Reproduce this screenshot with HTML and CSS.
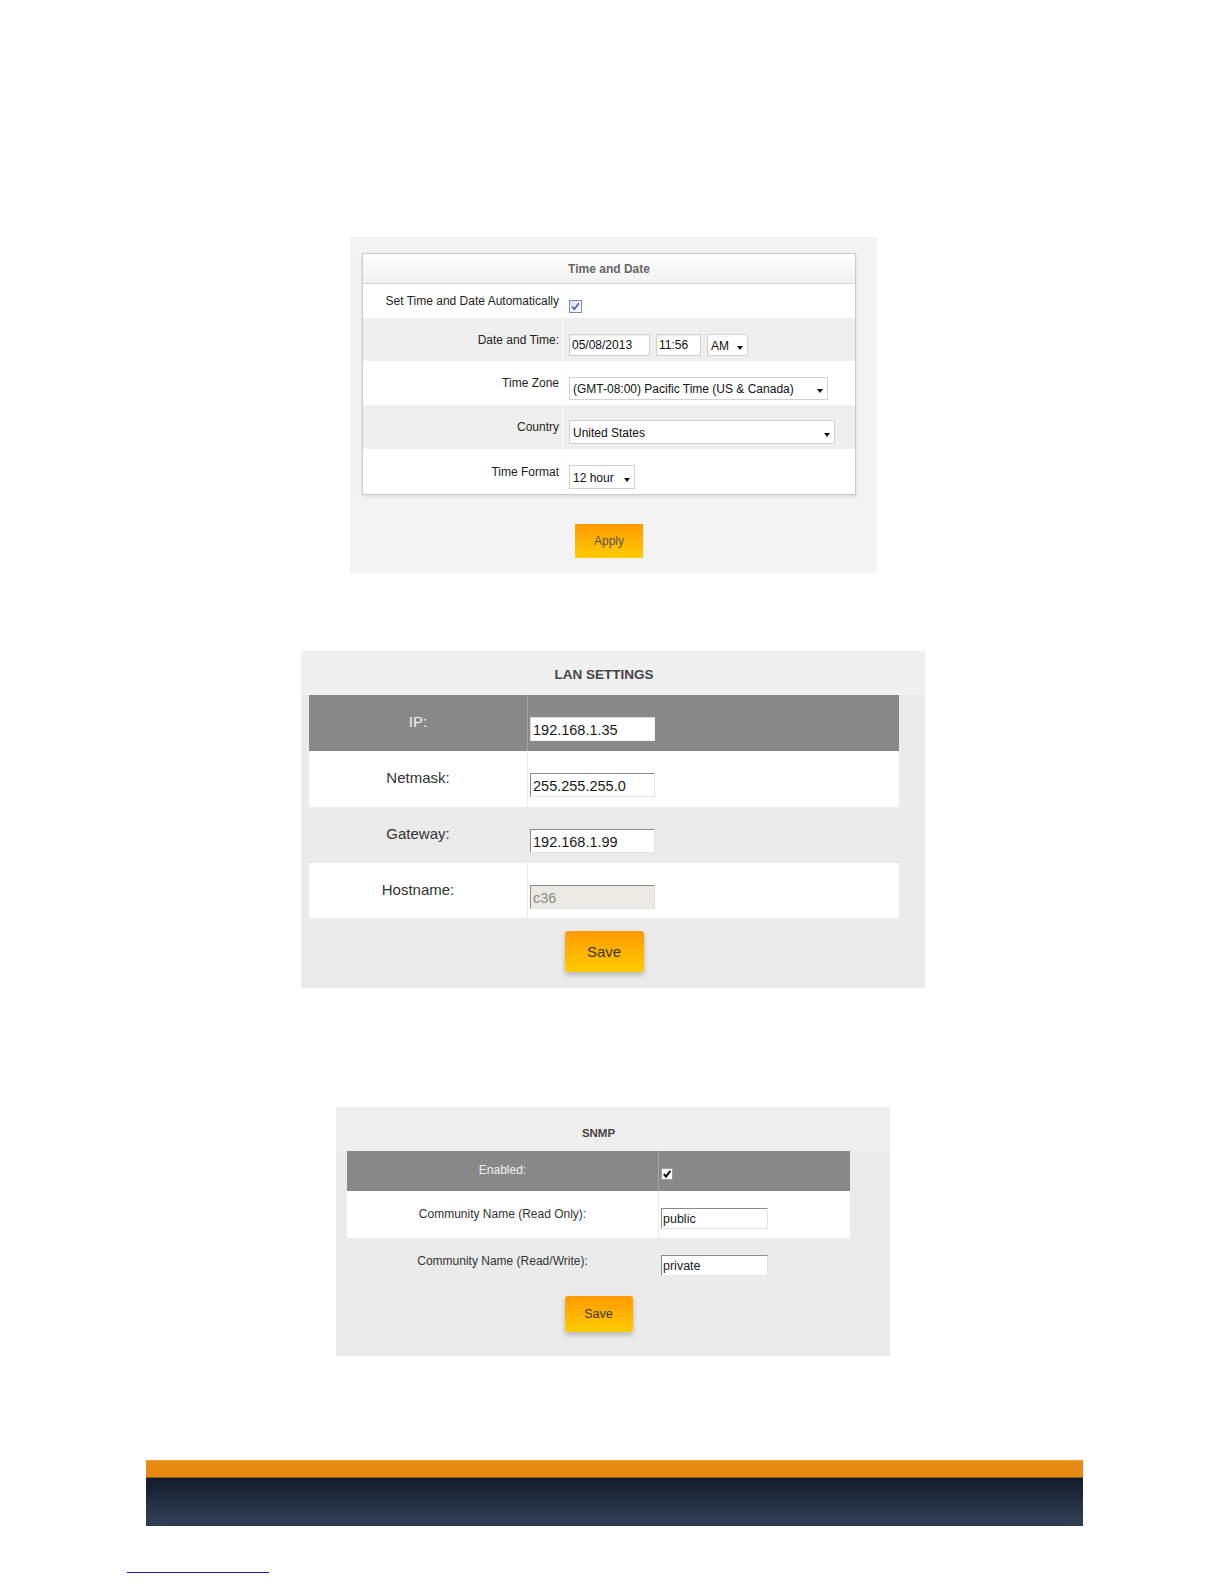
FILE: index.html
```html
<!DOCTYPE html>
<html lang="en">
<head>
  <meta charset="UTF-8">
  <meta name="viewport" content="width=device-width, initial-scale=1.0">
  <title>Settings</title>
  <link rel="stylesheet" href="styles.css">
</head>
<body>

  <!-- Time and Date -->
  <section class="time-panel">
    <div class="time-box">
      <table class="time-table">
        <tr class="time-head-row">
          <th colspan="2">Time and Date</th>
        </tr>
        <tr class="r-auto">
          <td class="lbl">Set Time and Date Automatically</td>
          <td class="val">
            <span class="check">
              <svg width="13" height="13" viewBox="0 0 13 13">
                <defs>
                  <linearGradient id="cbg" x1="0" y1="0" x2="1" y2="1">
                    <stop offset="0" stop-color="#dcdce6"/>
                    <stop offset="1" stop-color="#ffffff"/>
                  </linearGradient>
                </defs>
                <rect x="0.5" y="0.5" width="12" height="12" fill="url(#cbg)" stroke="#7f89ad"/>
                <path d="M3.2 6.4 L5.4 9.2 L9.8 3.2" fill="none" stroke="#4d55b3" stroke-width="1.6"/>
              </svg>
            </span>
          </td>
        </tr>
        <tr class="r-date alt">
          <td class="lbl">Date and Time:</td>
          <td class="val">
            <div class="ctrls">
              <input class="field f-date" type="text" value="05/08/2013">
              <input class="field f-time" type="text" value="11:56">
              <span class="sel s-ampm">
                <select><option>AM</option><option>PM</option></select>
              </span>
            </div>
          </td>
        </tr>
        <tr class="r-zone">
          <td class="lbl">Time Zone</td>
          <td class="val">
            <span class="sel s-zone">
              <select><option>(GMT-08:00) Pacific Time (US &amp; Canada)</option></select>
            </span>
          </td>
        </tr>
        <tr class="r-country alt">
          <td class="lbl">Country</td>
          <td class="val">
            <span class="sel s-country">
              <select><option>United States</option></select>
            </span>
          </td>
        </tr>
        <tr class="r-format">
          <td class="lbl">Time Format</td>
          <td class="val">
            <span class="sel s-format">
              <select><option>12 hour</option><option>24 hour</option></select>
            </span>
          </td>
        </tr>
      </table>
    </div>
    <button class="btn-apply" type="button">Apply</button>
  </section>

  <!-- LAN settings -->
  <section class="lan-panel">
    <div class="lan-title">LAN SETTINGS</div>
    <table class="lan-table">
      <tr class="dark">
        <td class="lbl">IP:</td>
        <td class="val"><input class="lan-field" type="text" value="192.168.1.35"></td>
      </tr>
      <tr class="light">
        <td class="lbl">Netmask:</td>
        <td class="val"><input class="lan-field" type="text" value="255.255.255.0"></td>
      </tr>
      <tr>
        <td class="lbl">Gateway:</td>
        <td class="val"><input class="lan-field" type="text" value="192.168.1.99"></td>
      </tr>
      <tr class="light last">
        <td class="lbl">Hostname:</td>
        <td class="val"><input class="lan-field" type="text" value="c36" disabled></td>
      </tr>
    </table>
    <button class="btn-save btn-save-lg" type="button">Save</button>
  </section>

  <!-- SNMP -->
  <section class="snmp-panel">
    <div class="snmp-title">SNMP</div>
    <table class="snmp-table">
      <tr class="dark">
        <td class="lbl">Enabled:</td>
        <td class="val">
          <span class="check-black">
            <svg width="12" height="12" viewBox="0 0 12 12">
              <rect x="0.5" y="0.5" width="11" height="11" fill="#fff" stroke="#9a9a9a"/>
              <path d="M2.8 6 L5 8.6 L9.3 2.8" fill="none" stroke="#111" stroke-width="2"/>
            </svg>
          </span>
        </td>
      </tr>
      <tr class="light">
        <td class="lbl">Community Name (Read Only):</td>
        <td class="val"><input class="snmp-field" type="text" value="public"></td>
      </tr>
      <tr>
        <td class="lbl">Community Name (Read/Write):</td>
        <td class="val"><input class="snmp-field" type="text" value="private"></td>
      </tr>
    </table>
    <button class="btn-save btn-save-sm" type="button">Save</button>
  </section>

  <!-- footer band -->
  <div class="footer-bar">
    <div class="footer-orange"></div>
    <div class="footer-dark"></div>
  </div>
  <a class="foot-link" href="#"></a>

</body>
</html>
```

FILE: styles.css
```css
body {
  margin: 0;
  font-family: "Liberation Sans", Arial, sans-serif;
  color: #222;
  background: #fff;
}

/* ---------- Time and Date ---------- */
.time-panel {
  box-sizing: border-box;
  width: 527px;
  height: 336px;
  margin: 237px 0 0 350px;
  padding: 16px 21px 0 12px;
  background: #f3f3f3;
}
.time-box {
  border: 1px solid #cacaca;
  background: #fff;
  box-shadow: 0 1px 3px rgba(0, 0, 0, 0.12);
}
.time-table {
  width: 100%;
  border-collapse: separate;
  border-spacing: 0;
  font-size: 12px;
}
.time-head-row th {
  height: 29px;
  padding: 0;
  border-bottom: 1px solid #d6d6d6;
  background: linear-gradient(#ffffff, #f1f1f1);
  color: #666;
  font-weight: bold;
  font-size: 12px;
  text-align: center;
}
.time-table td {
  padding: 0;
}
.time-table .lbl {
  width: 196px;
  padding-right: 3px;
  text-align: right;
  vertical-align: middle;
  color: #1e1e1e;
}
.time-table .val {
  border-left: 1px solid #fbfbfb;
  padding: 10px 0 0 6px;
  vertical-align: middle;
}
.time-table .alt td {
  background: #efefef;
}
.r-auto { height: 34px; }
.r-date { height: 43px; }
.r-zone { height: 44px; }
.r-country { height: 44px; }
.r-format { height: 45px; }

.check {
  display: block;
  width: 13px;
  height: 13px;
}
.check svg {
  display: block;
}

.ctrls {
  display: flex;
  gap: 6px;
}
.field {
  box-sizing: border-box;
  height: 22px;
  padding: 0 2px;
  border: 1px solid #cfcfcf;
  background: #fff;
  font-family: "Liberation Sans", Arial, sans-serif;
  font-size: 12px;
  color: #111;
  box-shadow: inset 0 1px 1px rgba(0, 0, 0, 0.05);
}
.f-date { width: 81px; }
.f-time { width: 45px; }

.sel {
  position: relative;
  display: block;
}
.sel select {
  box-sizing: border-box;
  width: 100%;
  height: 100%;
  padding: 2px 14px 0 3px;
  border: 1px solid #d2d2d2;
  border-radius: 0;
  background: #fff;
  appearance: none;
  -webkit-appearance: none;
  font-family: "Liberation Sans", Arial, sans-serif;
  font-size: 12px;
  color: #111;
}
.sel::after {
  content: "";
  position: absolute;
  right: 5px;
  top: 50%;
  margin-top: 1px;
  border-left: 3px solid transparent;
  border-right: 3px solid transparent;
  border-top: 4px solid #111;
}
.s-ampm { width: 41px; height: 22px; }
.s-zone { width: 259px; height: 23px; }
.s-country { width: 266px; height: 24px; }
.s-format { width: 66px; height: 24px; }

.btn-apply {
  display: block;
  width: 68px;
  height: 34px;
  margin: 29px auto 0;
  border: none;
  background: linear-gradient(#ff9a00, #ffcc00);
  font-family: "Liberation Sans", Arial, sans-serif;
  font-size: 12px;
  color: #555;
}

/* ---------- LAN settings ---------- */
.lan-panel {
  box-sizing: border-box;
  width: 624px;
  height: 337px;
  margin: 78px 0 0 301px;
  padding: 0 26px 0 8px;
  background: linear-gradient(#f0f0f0 44px, #ebebeb 44px);
}
.lan-title {
  box-sizing: border-box;
  height: 44px;
  padding-top: 16px;
  line-height: 16px;
  text-align: center;
  font-weight: bold;
  font-size: 13.5px;
  color: #444;
}
.lan-table {
  width: 590px;
  border-collapse: separate;
  border-spacing: 0;
}
.lan-table tr {
  height: 56px;
}
.lan-table tr.last {
  height: 55px;
}
.lan-table td {
  padding: 0;
  vertical-align: top;
}
.lan-table .lbl {
  width: 218px;
  padding-top: 18px;
  line-height: 17px;
  text-align: center;
  font-size: 15px;
  color: #333;
}
.lan-table .val {
  padding: 22px 0 0 2px;
  border-left: 1px solid transparent;
}
.lan-table .dark td {
  background: #888;
}
.lan-table .dark .lbl {
  color: #f2f2f2;
}
.lan-table .dark .val {
  border-left-color: #a4a4a4;
}
.lan-table .light td {
  background: #fff;
}
.lan-table .light .val {
  border-left-color: #ececec;
}
.lan-field {
  box-sizing: border-box;
  display: block;
  width: 125px;
  height: 24px;
  padding: 1px 2px 0;
  border: 1px solid;
  border-color: #8c8c8c #e4e4e4 #e4e4e4 #8c8c8c;
  background: #fff;
  font-family: "Liberation Sans", Arial, sans-serif;
  font-size: 14.5px;
  color: #1a1a1a;
}
.dark .lan-field {
  border-color: #d8d8d8 #f4f4f4 #f4f4f4 #d8d8d8;
}
.lan-field:disabled {
  background: #ebebe4;
  color: #8a8a8a;
}

.btn-save {
  display: block;
  margin: 0 auto;
  border: none;
  border-radius: 3px;
  background: linear-gradient(#ff9a00, #ffcc00);
  box-shadow: 0 3px 5px rgba(0, 0, 0, 0.22);
  font-family: "Liberation Sans", Arial, sans-serif;
  color: #3e3420;
}
.btn-save-lg {
  width: 79px;
  height: 41px;
  margin-top: 13px;
  font-size: 15px;
}
.btn-save-sm {
  width: 68px;
  height: 36px;
  margin-top: 11px;
  font-size: 12.5px;
}

/* ---------- SNMP ---------- */
.snmp-panel {
  box-sizing: border-box;
  width: 554px;
  height: 249px;
  margin: 119px 0 0 336px;
  padding: 0 40px 0 11px;
  background: linear-gradient(#efefef 44px, #ebebeb 44px);
}
.snmp-title {
  box-sizing: border-box;
  height: 44px;
  padding-top: 19px;
  line-height: 14px;
  text-align: center;
  font-weight: bold;
  font-size: 11.5px;
  color: #444;
}
.snmp-table {
  width: 503px;
  border-collapse: separate;
  border-spacing: 0;
}
.snmp-table tr {
  height: 47px;
}
.snmp-table tr.dark {
  height: 40px;
}
.snmp-table td {
  padding: 0;
  vertical-align: top;
}
.snmp-table .lbl {
  width: 311px;
  padding-top: 16px;
  line-height: 14px;
  text-align: center;
  font-size: 12px;
  color: #333;
}
.snmp-table .dark .lbl {
  padding-top: 12px;
  color: #f2f2f2;
}
.snmp-table .val {
  padding: 17px 0 0 2px;
  border-left: 1px solid transparent;
}
.snmp-table .dark td {
  background: #888;
}
.snmp-table .dark .val {
  border-left-color: #a4a4a4;
}
.snmp-table .light td {
  background: #fff;
}
.snmp-table .light .val {
  border-left-color: #ececec;
}
.check-black {
  display: block;
  width: 12px;
  height: 12px;
}
.check-black svg {
  display: block;
}
.snmp-field {
  box-sizing: border-box;
  display: block;
  width: 107px;
  height: 21px;
  padding: 1px 1px 0;
  border: 1px solid;
  border-color: #8c8c8c #e4e4e4 #e4e4e4 #8c8c8c;
  background: #fff;
  font-family: "Liberation Sans", Arial, sans-serif;
  font-size: 12.5px;
  color: #1a1a1a;
}

/* ---------- footer ---------- */
.footer-bar {
  width: 937px;
  margin: 104px 0 0 146px;
}
.footer-orange {
  height: 17px;
  border-bottom: 1px solid #8a5c1c;
  background: linear-gradient(#f0a030 0, #e68b14 2px, #e68913);
}
.footer-dark {
  height: 48px;
  background: linear-gradient(#141d2f 0%, #1a2437 25%, #283548 65%, #2f3c52 85%, #2e3b50 100%);
}
.foot-link {
  display: block;
  width: 142px;
  height: 0;
  margin: 46px 0 0 127px;
  border-top: 1px solid #1c1ccc;
}
```
